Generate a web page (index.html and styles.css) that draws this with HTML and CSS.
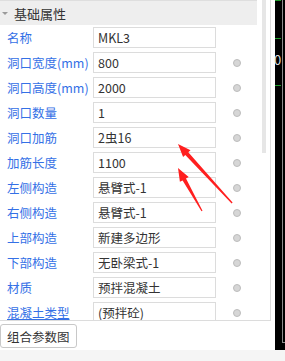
FILE: index.html
```html
<!doctype html>
<html>
  <head>
    <title>属性</title>
    <link rel="stylesheet" href="styles.css">
  </head>
  <body>
    <div class="screen">
      <div class="main">
        <div class="left">
          <div class="panel">
            <div class="list">
              <div class="group"><span class="caret"></span>基础属性</div>
              <div class="row"><span class="label">名称</span><span class="value">MKL3</span><span class="dot hidden"></span></div>
              <div class="row"><span class="label">洞口宽度(mm)</span><span class="value">800</span><span class="dot"></span></div>
              <div class="row"><span class="label">洞口高度(mm)</span><span class="value">2000</span><span class="dot"></span></div>
              <div class="row"><span class="label">洞口数量</span><span class="value">1</span><span class="dot"></span></div>
              <div class="row"><span class="label">洞口加筋</span><span class="value">2虫16</span><span class="dot"></span></div>
              <div class="row"><span class="label">加筋长度</span><span class="value">1100</span><span class="dot"></span></div>
              <div class="row"><span class="label">左侧构造</span><span class="value">悬臂式-1</span><span class="dot"></span></div>
              <div class="row"><span class="label">右侧构造</span><span class="value">悬臂式-1</span><span class="dot"></span></div>
              <div class="row"><span class="label">上部构造</span><span class="value">新建多边形</span><span class="dot"></span></div>
              <div class="row"><span class="label">下部构造</span><span class="value">无卧梁式-1</span><span class="dot"></span></div>
              <div class="row"><span class="label">材质</span><span class="value">预拌混凝土</span><span class="dot"></span></div>
              <div class="row"><span class="label link">混凝土类型</span><span class="value">(预拌砼)</span><span class="dot"></span></div>
            </div>
            <div class="scroll"><div class="thumb"></div></div>
          </div>
          <div class="actions">
            <button class="btn" type="button">组合参数图</button>
          </div>
        </div>
        <div class="canvas">
          <div class="frame"></div>
          <span class="tick t1"></span>
          <span class="tick t2"></span>
          <span class="tick t3"></span>
          <span class="glyph">0</span>
        </div>
      </div>
      <div class="footer"></div>

      <svg class="arrows" width="285" height="361" viewBox="0 0 285 361">
        <polygon points="178,144 190.5,150.2 188.3,152.3 232.6,202.6 231.6,203.4 185.3,155 183.1,157" fill="#ff1f1f"/>
        <polygon points="178,168 188.7,177 186,178.4 202.5,210.8 201.5,211.2 182.6,180.4 179.9,181.8" fill="#ff1f1f"/>
      </svg>
    </div>
  </body>
</html>
```

FILE: styles.css
```css
* {
  box-sizing: border-box;
}
body {
  margin: 0;
  font-family: "Noto Sans CJK SC", "Liberation Sans", sans-serif;
  font-size: 12.5px;
  color: #333;
  background: #fff;
}
.screen {
  position: relative;
  width: 285px;
  height: 361px;
  overflow: hidden;
  display: flex;
  flex-direction: column;
}
.main {
  display: flex;
  height: 350px;
  gap: 4px;
}
.left {
  width: 271px;
  display: flex;
  flex-direction: column;
}
.panel {
  display: flex;
  height: 321px;
  border-right: 1px solid #dcdcdc;
  border-bottom: 1px solid #dcdcdc;
}
.list {
  width: 257px;
  height: 320px;
  overflow: hidden;
}
.group {
  display: flex;
  align-items: center;
  height: 25px;
  border-top: 1px solid #dedede;
  background: #eeeeee;
  padding-left: 2px;
  color: #333;
  font-size: 13px;
}
.caret {
  width: 0;
  height: 0;
  border-left: 3px solid transparent;
  border-right: 3px solid transparent;
  border-top: 3px solid #9a9a9a;
  margin-right: 6px;
}
.row {
  display: flex;
  align-items: center;
  height: 25px;
}
.label {
  width: 93px;
  padding-left: 7px;
  color: #3470e6;
  white-space: nowrap;
}
.link {
  text-decoration: underline;
}
.value {
  width: 123px;
  height: 21px;
  line-height: 19px;
  border: 1px solid #dcdcdc;
  padding-left: 4px;
  color: #333;
  white-space: nowrap;
}
.dot {
  width: 8px;
  height: 8px;
  margin-left: 17px;
  border-radius: 50%;
  background: #d6d6d6;
  border: 1px solid #bcbcbc;
}
.hidden {
  visibility: hidden;
}
.scroll {
  width: 13px;
  padding-left: 5px;
}
.thumb {
  width: 4px;
  height: 153px;
  background: #e6e6e6;
}
.actions {
  padding-top: 3px;
}
.btn {
  height: 24px;
  padding: 0 6px;
  border: 1px solid #c8c8c8;
  border-radius: 3px;
  background: #fff;
  font-family: inherit;
  font-size: 12.5px;
  color: #333;
}
.canvas {
  position: relative;
  width: 10px;
  background: #000;
}
.frame {
  margin-left: 7px;
  height: 343px;
  border-left: 1px solid #8c8c8c;
  border-bottom: 1px solid #8c8c8c;
}
.tick {
  position: absolute;
  left: 0;
  width: 6px;
  height: 1px;
  background: #1f9a2a;
}
.t1 {
  top: 0;
}
.t2 {
  top: 38px;
}
.t3 {
  top: 85px;
}
.glyph {
  position: absolute;
  left: -1px;
  top: 52px;
  font-size: 13px;
  color: #ddd;
  line-height: 16px;
}
.footer {
  height: 11px;
  background: #f5f5f5;
}
.arrows {
  position: absolute;
  left: 0;
  top: 0;
  pointer-events: none;
}
```
